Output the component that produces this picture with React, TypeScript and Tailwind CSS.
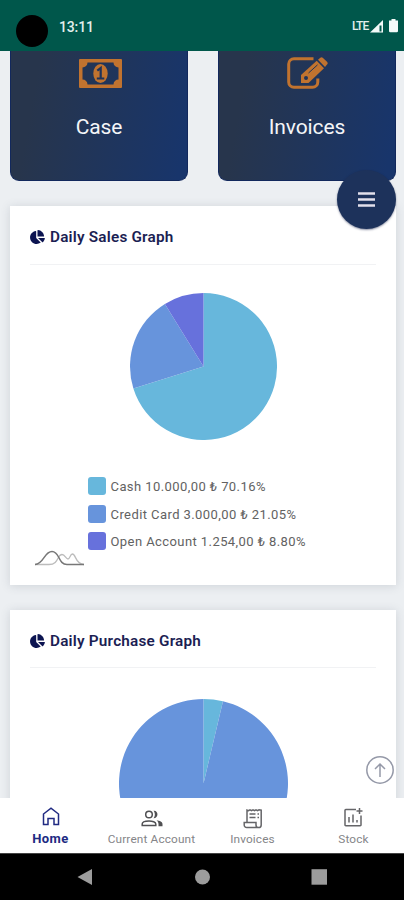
import type { ReactNode } from 'react'
import { FaChartPie } from 'react-icons/fa'

type Slice = { color: string; value: number }

const SALES = [
  { name: 'Cash', amount: '10.000,00', percent: '70.16', value: 70.16, color: '#67b7dc', swatch: 'bg-[#67b7dc]' },
  { name: 'Credit Card', amount: '3.000,00', percent: '21.05', value: 21.04, color: '#6794dc', swatch: 'bg-[#6794dc]' },
  { name: 'Open Account', amount: '1.254,00', percent: '8.80', value: 8.8, color: '#6771dc', swatch: 'bg-[#6771dc]' },
]

const PURCHASES: Slice[] = [
  { color: '#67b7dc', value: 3.7 },
  { color: '#6794dc', value: 96.3 },
]

function Pie({ slices, className }: { slices: Slice[]; className: string }) {
  const total = slices.reduce((sum, s) => sum + s.value, 0)
  let start = 0
  return (
    <svg viewBox="-100 -100 200 200" className={className}>
      {slices.map((s) => {
        const a = (start / total) * Math.PI * 2
        start += s.value
        const b = (start / total) * Math.PI * 2
        const large = b - a > Math.PI ? 1 : 0
        const d = `M0 0L${100 * Math.sin(a)} ${-100 * Math.cos(a)}A100 100 0 ${large} 1 ${100 * Math.sin(b)} ${-100 * Math.cos(b)}Z`
        return <path key={s.color} d={d} fill={s.color} />
      })}
    </svg>
  )
}

function MoneyIcon() {
  return (
    <svg viewBox="0 0 43 29" className="ml-[2px] h-[29px] w-[43px]" fill="none">
      <path fill="#c1732f" fillRule="evenodd" d="M1 0H42a1 1 0 0 1 1 1V28a1 1 0 0 1-1 1H1a1 1 0 0 1-1-1V1a1 1 0 0 1 1-1ZM8.500 3.500A5 5 0 0 1 3.500 8.500V20.500A5 5 0 0 1 8.500 25.500H34.500A5 5 0 0 1 39.500 20.500V8.500A5 5 0 0 1 34.500 3.500Z" />
      <ellipse cx="21.500" cy="14.500" rx="7.200" ry="9.600" fill="#c1732f" />
      <path stroke="#1f3359" strokeWidth="2.200" d="M18.300 11.700l3.400-2.700v10.500M17.800 19.500h7.500" />
    </svg>
  )
}

function EditIcon() {
  return (
    <svg viewBox="0 0 41 32" className="h-8 w-[41px]" fill="none">
      <path stroke="#c1732f" strokeWidth="3" d="M26.500 1.800H7A5.300 5.300 0 0 0 1.700 7V25A5.300 5.300 0 0 0 7 30.300H25.500A5.300 5.300 0 0 0 30.800 25V21.500" />
      <path fill="#c1732f" d="M14 18L29.700 3.800L37 11.200L21.500 26H14Z" />
      <path fill="#c1732f" d="M31 2.800L33.300.8a2 2 0 0 1 2.700.1L40 4.800a2 2 0 0 1 0 2.800L38 9.900Z" />
      <path stroke="#1f3359" strokeWidth="1" d="M21.500 16L30.500 7.900" />
      <circle cx="19" cy="21" r="2" fill="#1f3359" />
    </svg>
  )
}

function StatusBar() {
  return (
    <header className="flex h-[51px] shrink-0 items-start bg-[#00574b]">
      <div className="ml-4 mt-[15px] h-8 w-8 rounded-full bg-black" />
      <span className="ml-[11px] mt-[17px] text-[14px] leading-[20px] font-medium tracking-[-0.15px] text-[#e3efed]">13:11</span>
      <div className="mt-[19px] mr-[6px] ml-auto flex items-center">
        <span className="w-[18px] text-[12px] leading-[14px] font-medium tracking-[-0.9px] text-[#e3efed]">LTE</span>
        <svg viewBox="0 0 13 13" className="h-[13px] w-[13px]">
          <path d="M0 12.500L13 0V12.500Z" fill="#f4faf9" />
          <path d="M9.500 5.500H11.500V11.500H9.500Z" fill="#00574b" />
        </svg>
        <svg viewBox="0 0 9 14" className="ml-[6px] h-[14px] w-[9px]">
          <path d="M2.500 0H6.500V1.500H9V12a1.300 1.300 0 0 1-1.300 1.300H1.300A1.300 1.300 0 0 1 0 12V1.500H2.500Z" fill="#f4faf9" />
        </svg>
      </div>
    </header>
  )
}

function Tile({ label, icon }: { label: string; icon: ReactNode }) {
  return (
    <div className="flex h-[130px] w-[178px] flex-col items-center rounded-b-[9px] border-x border-b border-[#12285c] bg-linear-[100deg] from-[#27354c] from-15% to-[#18356b] to-95%">
      <div className="flex h-[44px] items-center">{icon}</div>
      <span className="mt-[18px] text-[21px] leading-[28px] tracking-[-0.1px] text-[#f4f5f8]">{label}</span>
    </div>
  )
}

function GraphCard({ title, className, children }: { title: string; className: string; children: ReactNode }) {
  return (
    <section className={`mr-2 ml-[10px] shrink-0 bg-white px-5 shadow-[0_1px_9px_rgba(60,70,90,0.17)] ${className}`}>
      <h2 className="flex items-center text-[15.3px] font-semibold tracking-[0.21px] text-[#1b1e53]">
        <FaChartPie className="mr-[5px] h-[14px] w-[15px] text-[#0c1451]" />
        {title}
      </h2>
      {children}
    </section>
  )
}

function NavItem({ label, icon, active }: { label: string; icon: ReactNode; active?: boolean }) {
  return (
    <div className={`flex flex-1 flex-col items-center pt-[7px] ${active ? 'text-[#202a82]' : 'text-[#77777a]'}`}>
      <div className="flex h-6 items-center justify-center">{icon}</div>
      <span className={active ? 'text-[13px] leading-[20px] font-bold tracking-[0.45px]' : 'text-[11.8px] leading-[20px] tracking-[0.15px] whitespace-nowrap text-[#858588]'}>
        {label}
      </span>
    </div>
  )
}

function BottomNav() {
  return (
    <nav className="flex h-[55px] shrink-0 bg-white">
      <NavItem
        active
        label="Home"
        icon={
          <svg viewBox="0 0 18 20" className="h-5 w-[18px]" fill="none" stroke="currentColor" strokeWidth="1.500">
            <path d="M1.500 7L9 1.200L16.500 7V17.500H12V11.500H6V17.500H1.500Z" />
          </svg>
        }
      />
      <NavItem
        label="Current Account"
        icon={
          <svg viewBox="0 0 22 17" className="mt-[2px] h-[17px] w-[22px]" fill="none" stroke="#505053" strokeWidth="1.500">
            <circle cx="8" cy="4.500" r="3.300" />
            <path d="M1.200 15.600V14c0-2 3.400-3.100 6.800-3.100s6.800 1.100 6.800 3.100v1.600Z" />
            <path fill="#505053" stroke="none" d="M12.500.700c5-.8 5.500 7.500 0 7.600c1.800-2 1.800-5.500 0-7.600ZM15.500 10.300c3.300.3 6 1.500 6 4v2h-4v-2c0-1.700-.7-3-2-4Z" />
          </svg>
        }
      />
      <NavItem
        label="Invoices"
        icon={
          <svg viewBox="0 0 20 21" className="mt-[2px] h-[21px] w-5" fill="none" stroke="#656568" strokeWidth="1.500">
            <path d="M4 14.500V2L5.500 2.600L7 1.800L8.500 2.600L10 1.800L11.500 2.600L13 1.800L14.500 2.600L16 1.800L18.200 2.200V17a2.600 2.600 0 0 1-5.200 0V14.500H1.200V17a2.500 2.500 0 0 0 2.500 2.600H16" />
            <path d="M6.500 6H12.500M6.500 9.500H12.500M14.500 6H16M14.500 9.500H16" />
          </svg>
        }
      />
      <NavItem
        label="Stock"
        icon={
          <svg viewBox="0 0 19 20" className="h-5 w-[19px]" fill="none" stroke="#656568" strokeWidth="1.500">
            <path d="M12 2.500H1.800a.8.8 0 0 0-.8.800V18a.8.8 0 0 0 .8.800H16.200a.8.8 0 0 0 .8-.8V8.500M15.500 1V7M12.500 4H18.500" />
            <path d="M5 10V15.500M9 7.500V15.500M13 13V15.500" />
          </svg>
        }
      />
    </nav>
  )
}

export default function App() {
  return (
    <div className="relative flex h-[900px] w-[404px] flex-col overflow-hidden bg-[#eceff2] font-[Roboto,sans-serif]">
      <StatusBar />
      <main className="flex min-h-0 flex-1 flex-col overflow-hidden">
        <div className="flex shrink-0 justify-between pr-2 pl-[10px]">
          <Tile label="Case" icon={<MoneyIcon />} />
          <Tile label="Invoices" icon={<EditIcon />} />
        </div>

        <GraphCard title="Daily Sales Graph" className="mt-[25px] h-[379px] pt-5">
          <div className="mt-[15px] flex justify-center border-t border-[#f1f2f4] pt-[28px]">
            <Pie slices={SALES} className="h-[147px] w-[147px]" />
          </div>
          <div className="flex pt-[37px]">
            <svg viewBox="0 0 50 16" className="mt-[73px] ml-[5px] h-4 w-[50px] shrink-0" fill="none">
              <path d="M0 14.500H14C24 14.500 22 4.500 27 4.500C30 4.500 31 9 33 9C35 9 35 4 37.500 4C41 4 40 14 49 14.500" stroke="#bcbcbc" strokeWidth="1.300" />
              <path d="M0 14.500C9 14 9 1.500 17 1.500C25 1.500 23 14.500 32 14.500H49" stroke="#777" strokeWidth="1.500" />
            </svg>
            <ul className="ml-[2.5px] flex flex-col gap-[9px]">
              {SALES.map((row) => (
                <li key={row.name} className="flex h-[18.500px] items-center">
                  <span className={`mr-[5px] h-[18px] w-[18px] rounded-[3px] ${row.swatch}`} />
                  <span className="pt-[2px] text-[13px] tracking-[0.42px] whitespace-nowrap text-[#626262]">
                    {row.name} {row.amount} ₺ {row.percent}%
                  </span>
                </li>
              ))}
            </ul>
          </div>
        </GraphCard>

        <GraphCard title="Daily Purchase Graph" className="mt-[25px] h-[379px] pt-5">
          <div className="mt-[14px] flex justify-center border-t border-[#f1f2f4] pt-[31px]">
            <Pie slices={PURCHASES} className="h-[169px] w-[169px]" />
          </div>
        </GraphCard>
      </main>
      <BottomNav />
      <footer className="flex h-[47px] shrink-0 items-center border-t border-[#444] bg-black pl-[77px]">
        <svg viewBox="0 0 250 18" className="h-[18px] w-[250px]" fill="#9c9c9c">
          <path d="M.5 9L15 1V17Z" />
          <circle cx="125.500" cy="9" r="7.500" />
          <path d="M234.500 1.200H250V16.700H234.500Z" />
        </svg>
      </footer>

      {/* floating buttons */}
      <button
        type="button"
        aria-label="Menu"
        className="absolute top-[170px] left-[337px] flex h-[59px] w-[59px] items-center justify-center rounded-full bg-[#1d325b] shadow-[0_1px_2px_rgba(20,30,70,0.5)]"
      >
        <svg viewBox="0 0 17 15" className="h-[15px] w-[17px]" stroke="#e2e0ec" strokeWidth="2.300">
          <path d="M0 1.500H17M0 7.500H17M0 13.500H17" />
        </svg>
      </button>
      <button type="button" aria-label="Scroll to top" className="absolute top-[756px] left-[366px]">
        <svg viewBox="0 0 28 28" className="h-7 w-7" fill="none" stroke="#9599a8" strokeWidth="1.500">
          <circle cx="14" cy="14" r="13.200" />
          <path d="M14 21V8M9 13L14 8L19 13" />
        </svg>
      </button>
    </div>
  )
}
